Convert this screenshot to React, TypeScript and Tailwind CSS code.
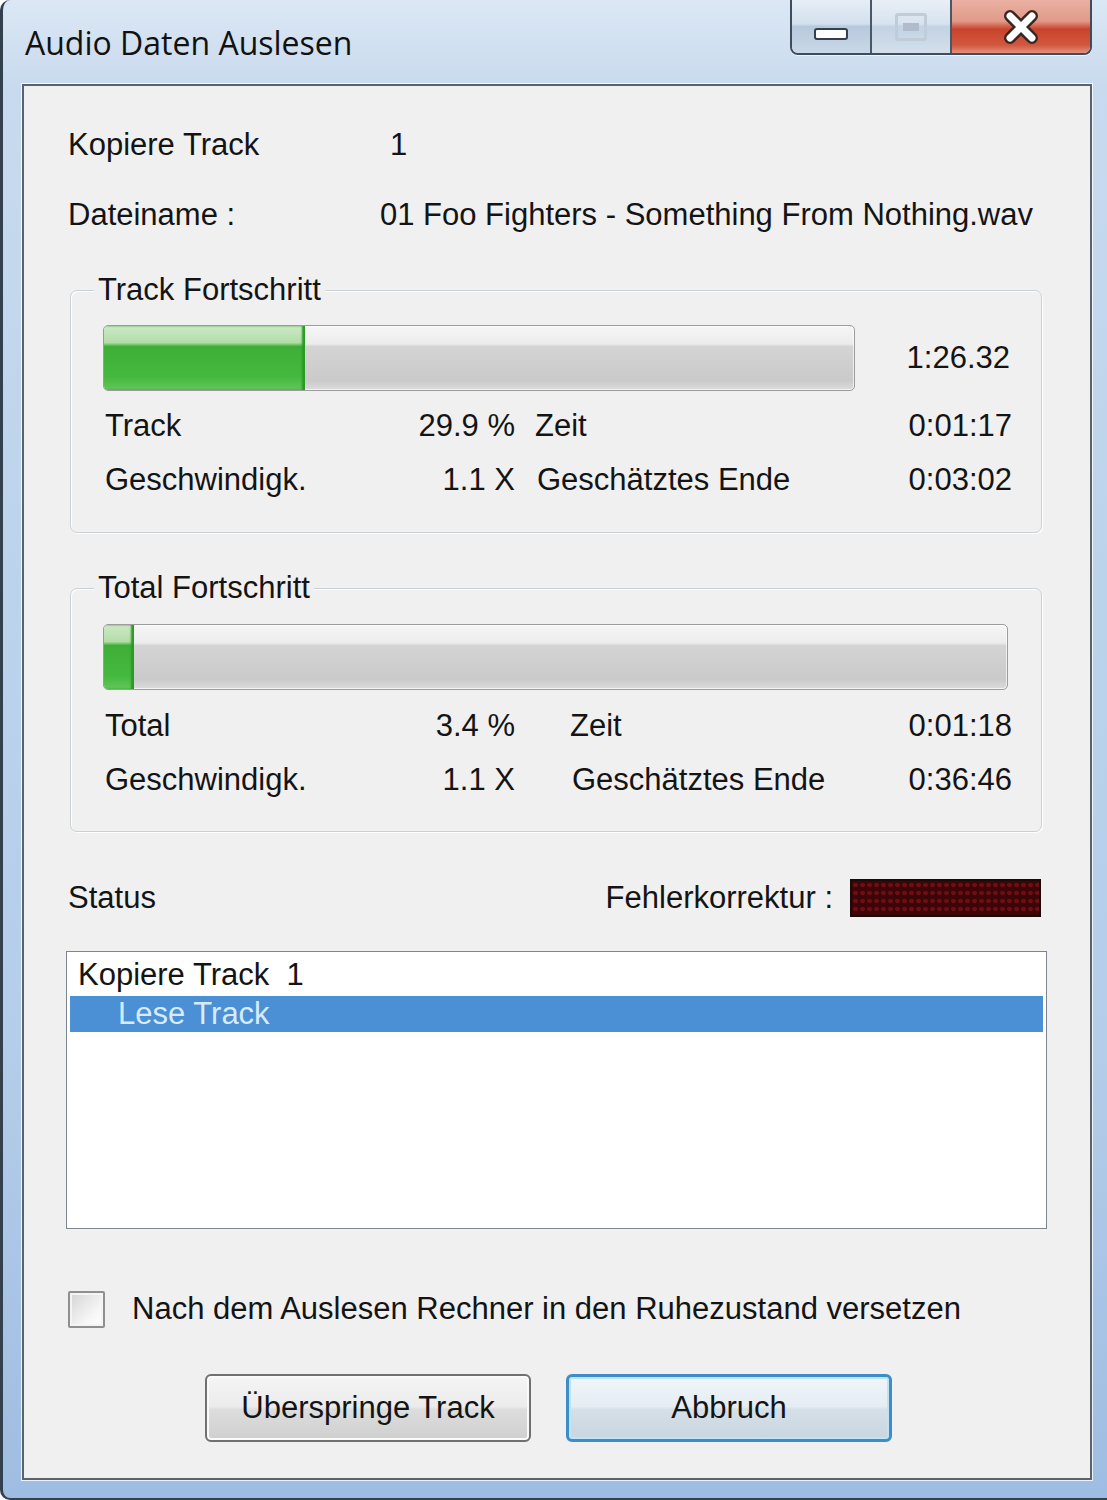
import React from "react";

// one "label ... value   label2 ... time" line inside a group box
interface PropsRow {
  label: string;
  value: string;
  label2: string;
  time: string;
  gap: string;
}

const StatRow: React.FC<PropsRow> = ({ label, value, label2, time, gap }) => (
  <div className="flex items-center h-[54px] pl-[34px] pr-[29px]">
    <div className="w-[410px] flex justify-between">
      <span>{label}</span>
      <span>{value}</span>
    </div>
    <span className={gap}>{label2}</span>
    <span className="ml-auto">{time}</span>
  </div>
);

const Bar = ({ width, fill }: { width: string; fill: string }) => (
  <div
    className={`flex h-[66px] rounded-[5px] border border-[#9c9c9c] overflow-hidden bg-[linear-gradient(#f6f6f6,#ececec_28%,#d4d4d4_32%,#cacaca_85%,#dcdcdc)] shadow-[inset_0_0_0_1px_#ffffffaa] ${width}`}
  >
    <div
      className={`h-full rounded-l-[4px] bg-[linear-gradient(#cde9c6,#b2dda7_26%,#3eae37_32%,#45b93f_80%,#62c65a)] shadow-[inset_-3px_0_2px_#2a9a25] ${fill}`}
    />
  </div>
);

const Group: React.FC<{ title: string; h: string; children: React.ReactNode }> = ({ title, h, children }) => (
  <div
    className={`relative mt-[55px] ml-[46px] w-[972px] rounded-[7px] border border-[#cbd0d5] shadow-[inset_1px_1px_0_#ffffff,1px_1px_0_#ffffff] ${h}`}
  >
    <span className="absolute -top-[21px] left-[23px] px-[4px] bg-[#f0f0f0] leading-[40px]">{title}</span>
    {children}
  </div>
);

const TitleButtons = () => (
  <div className="flex w-[302px] h-[55px] rounded-b-[8px] border-2 border-t-0 border-[#3f4c5b] overflow-hidden shadow-[0_1px_0_#ffffffaa]">
    <div className="w-[80px] flex items-end justify-center pb-[13px] bg-[linear-gradient(#e6eef7,#d3e0ee_45%,#b7c9dc_50%,#c9d8e8)] border-r-2 border-[#4a5766]">
      <div className="w-[34px] h-[12px] rounded-[3px] bg-white border-2 border-[#34404d]" />
    </div>
    <div className="w-[80px] flex items-center justify-center bg-[linear-gradient(#e8eff7,#d8e3ef_45%,#c3d3e3_50%,#d3dfeb)] border-r-2 border-[#4a5766]">
      <div className="w-[32px] h-[28px] rounded-[3px] border-[3px] border-[#c0ccd8] flex items-center justify-center">
        <div className="w-[16px] h-[8px] bg-[#b0bccb]" />
      </div>
    </div>
    <div className="flex-1 flex items-center justify-center bg-[linear-gradient(#eab0a2,#e19a88_40%,#c9432c_55%,#d0583e_85%,#e4917c)]">
      <svg width="40" height="34" viewBox="0 0 40 34">
        <path d="M9 6 L31 28 M31 6 L9 28" stroke="#3a2622" strokeWidth="12" strokeLinecap="round" />
        <path d="M9 6 L31 28 M31 6 L9 28" stroke="#ffffff" strokeWidth="7" strokeLinecap="round" />
      </svg>
    </div>
  </div>
);

export default function App() {
  return (
    <div
      className="w-[1107px] h-[1500px] flex flex-col pl-[19px] pr-[15px] pb-[18px] border-l-[3px] border-b-[2px] border-[#33414f] rounded-tl-[10px] rounded-bl-[10px] bg-[linear-gradient(180deg,#dbe7f4,#c8daee_6%,#bcd3ec_40%,#b4cde9_70%,#9fbde2)] text-[#141414] text-[31px]"
      style={{ fontFamily: '"Liberation Sans", Arial, sans-serif' }}
    >
      {/* title bar */}
      <div className="h-[84px] flex items-start justify-between">
        <span className="mt-[19px] ml-[3px] text-[32px] text-[#111]" style={{ fontFamily: '"Open Sans", "Liberation Sans", sans-serif' }}>
          Audio Daten Auslesen
        </span>
        <TitleButtons />
      </div>

      {/* client area */}
      <div className="flex-1 flex flex-col border-2 border-[#59636e] bg-[#f0f0f0] shadow-[0_0_0_1px_#ffffffcc]">
        <div className="mt-[39px] h-[40px] flex items-center pl-[44px]">
          <span className="w-[322px]">Kopiere Track</span>
          <span>1</span>
        </div>
        <div className="mt-[30px] h-[40px] flex items-center pl-[44px]">
          <span className="w-[312px]">Dateiname :</span>
          <span>01 Foo Fighters - Something From Nothing.wav</span>
        </div>

        <Group title="Track Fortschritt" h="h-[243px]">
          <div className="flex items-center pt-[34px] pl-[32px] pr-[31px]">
            <Bar width="w-[752px]" fill="w-[201px]" />
            <span className="ml-auto">1:26.32</span>
          </div>
          <div className="mt-[8px]">
            <StatRow label="Track" value="29.9 %" label2="Zeit" time="0:01:17" gap="ml-[20px]" />
            <StatRow label="Geschwindigk." value="1.1 X" label2="Geschätztes Ende" time="0:03:02" gap="ml-[22px]" />
          </div>
        </Group>

        <Group title="Total Fortschritt" h="h-[244px]">
          <div className="flex items-center pt-[35px] pl-[32px]">
            <Bar width="w-[905px]" fill="w-[30px]" />
          </div>
          <div className="mt-[9px]">
            <StatRow label="Total" value="3.4 %" label2="Zeit" time="0:01:18" gap="ml-[55px]" />
            <StatRow label="Geschwindigk." value="1.1 X" label2="Geschätztes Ende" time="0:36:46" gap="ml-[57px]" />
          </div>
        </Group>

        {/* status line */}
        <div className="mt-[46px] h-[40px] flex items-center pl-[44px] pr-[49px]">
          <span>Status</span>
          <span className="ml-auto">Fehlerkorrektur :</span>
          <div className="ml-[17px] w-[191px] h-[38px] border-2 border-[#1a0a0a] bg-[#3c0508] bg-[radial-gradient(circle,#6e0d12_40%,transparent_48%)] bg-[length:7px_8px]" />
        </div>

        {/* list box */}
        <div className="mt-[33px] ml-[42px] w-[981px] h-[278px] border border-[#7e858e] bg-white pt-[4px] px-[3px]">
          <div className="h-[38px] flex items-center pl-[8px] whitespace-pre">Kopiere Track  1</div>
          <div className="mt-[2px] h-[36px] flex items-center pl-[48px] bg-[#4b8fd5] text-[#d6ecfd]">Lese Track</div>
        </div>

        {/* checkbox */}
        <div className="mt-[62px] h-[37px] flex items-center pl-[44px]">
          <div className="w-[37px] h-[37px] rounded-[2px] border-2 border-[#8d8f91] bg-[linear-gradient(135deg,#d4d4d4,#f7f7f7_70%,#ffffff)] shadow-[inset_0_0_0_2px_#f4f4f4]" />
          <span className="ml-[27px]">Nach dem Auslesen Rechner in den Ruhezustand versetzen</span>
        </div>

        {/* buttons */}
        <div className="mt-[46px] flex pl-[181px]">
          <button className="w-[326px] h-[68px] rounded-[6px] border-2 border-[#707070] bg-[linear-gradient(#f5f5f5,#ebebeb_48%,#dddddd_52%,#cfcfcf)] shadow-[inset_0_0_0_2px_#fafafa] text-[31px]">
            Überspringe Track
          </button>
          <button className="ml-[35px] w-[326px] h-[68px] rounded-[6px] border-[3px] border-[#3c8dc8] bg-[linear-gradient(#f0f5f9,#e5edf3_48%,#d5e0e8_52%,#c9d6df)] shadow-[inset_0_0_0_2px_#bfe4f8] text-[31px]">
            Abbruch
          </button>
        </div>
      </div>
    </div>
  );
}
